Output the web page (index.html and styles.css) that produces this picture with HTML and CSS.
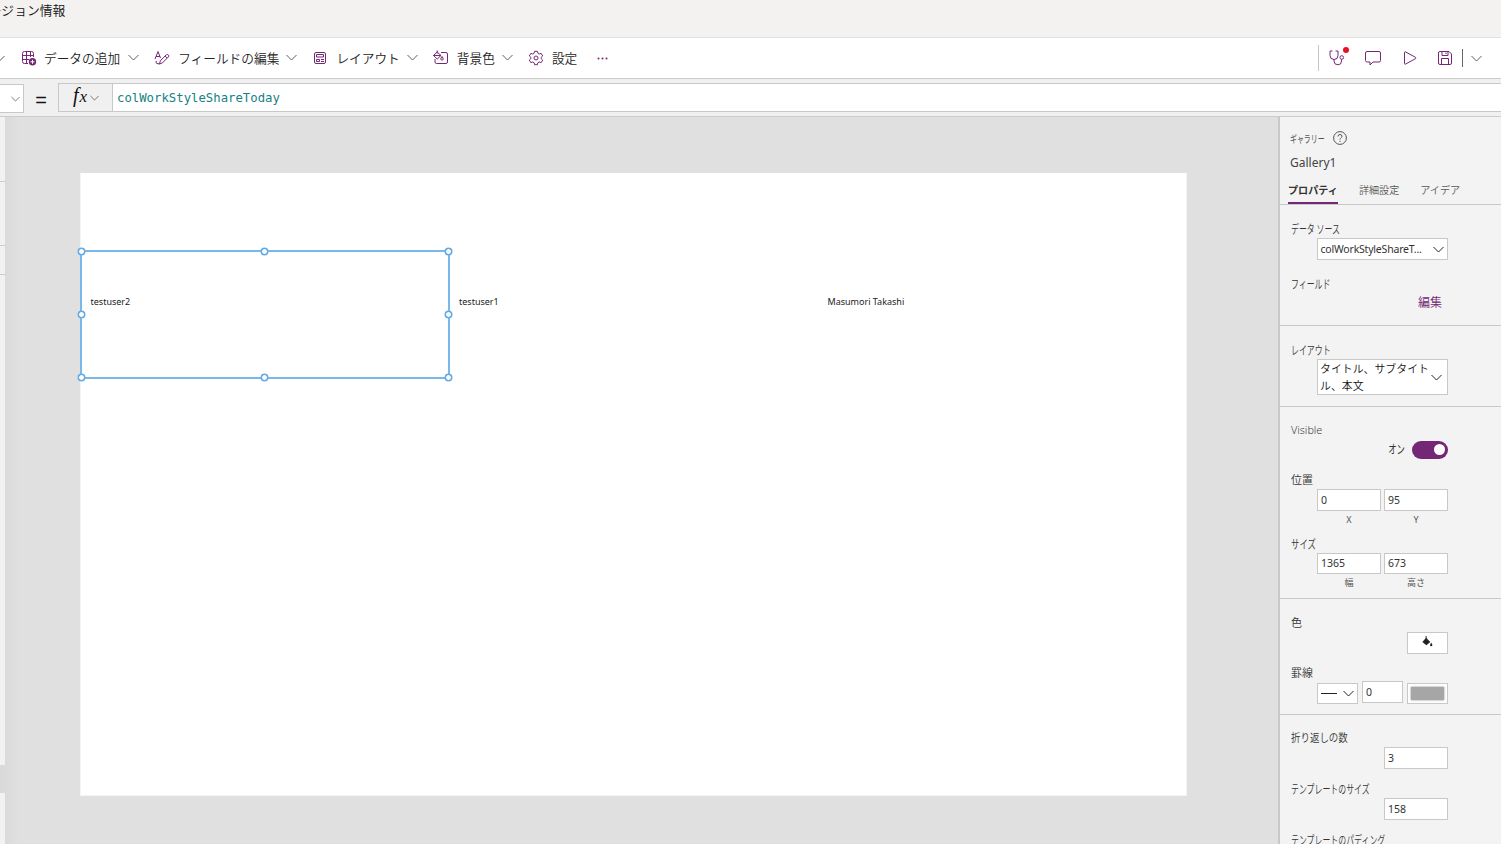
FILE: index.html
```html
<!DOCTYPE html>
<html lang="ja">
<head>
    <meta charset="UTF-8">
    <meta name="viewport" content="width=device-width, initial-scale=1.0">
    <title>Power Apps Studio</title>
    <link rel="stylesheet" href="styles.css">
</head>
<body>
    <header class="menubar"><span>バージョン情報</span></header>

    <nav class="toolbar">
        <svg class="chev first" viewBox="0 0 11 7"><path d="M.5 1l5 5 5-5"/></svg>
        <div class="tools">
            <button class="tool">
                <svg class="icon" viewBox="0 0 16 16"><path d="M7 13.500H3.500a2 2 0 0 1-2-2v-8a2 2 0 0 1 2-2h7a2 2 0 0 1 2 2V7M1.500 5.500h11M1.500 9.500H8M5.500 1.500v12M9.500 1.500V7"/><circle class="solid" cx="11.500" cy="11.800" r="3.700"/><path class="knock" d="M11.500 9.800v4M9.500 11.800h4"/></svg>
                <span>データの追加</span>
                <svg class="chev" viewBox="0 0 11 7"><path d="M.5 1l5 5 5-5"/></svg>
            </button>
            <button class="tool">
                <svg class="icon" viewBox="0 0 16 16"><path d="M1 9L4 1.500 6.500 8M2 6.500h4M5.500 14l.8-3.200 6-6q1-.8 2 .1t.1 2l-6 6zM11 6l2 2M2.300 11q-1 2 .7 2.500l2.500.5"/></svg>
                <span>フィールドの編集</span>
                <svg class="chev" viewBox="0 0 11 7"><path d="M.5 1l5 5 5-5"/></svg>
            </button>
            <button class="tool">
                <svg class="icon" viewBox="0 0 16 16"><rect x="2.500" y="2.500" width="11" height="11" rx="1.500"/><path d="M4.500 4.500h7v2.500h-7zM4.500 9.500H7.500v2H4.500zM9 9.500h3M9 11.500h3"/></svg>
                <span>レイアウト</span>
                <svg class="chev" viewBox="0 0 11 7"><path d="M.5 1l5 5 5-5"/></svg>
            </button>
            <button class="tool">
                <svg class="icon" viewBox="0 0 16 16"><path d="M8 2.500h5a1.500 1.500 0 0 1 1.500 1.500v8a1.500 1.500 0 0 1-1.500 1.500H3.500A1.500 1.500 0 0 1 2 12V9M.5 5.500L4.200 2 8 5.500 4.200 9zM.5 5.500H8M4.200.5v3M9 6.500q2.500 3.500 0 3.500t0-3.500z"/></svg>
                <span>背景色</span>
                <svg class="chev" viewBox="0 0 11 7"><path d="M.5 1l5 5 5-5"/></svg>
            </button>
            <button class="tool">
                <svg class="icon" viewBox="0 0 16 16"><path d="M6.600 1.300h2.800l.5 2 1.300.7 2-.6 1.500 2.500L13.200 7.300v1.400l1.500 1.400-1.500 2.500-2-.6-1.300.7-.5 2H6.600l-.5-2-1.300-.7-2 .6-1.500-2.500 1.500-1.400V7.300L1.300 5.900l1.500-2.500 2 .6 1.300-.7z"/><circle cx="8" cy="8" r="2"/></svg>
                <span>設定</span>
            </button>
            <svg class="dots" viewBox="0 0 11 3"><circle cx="1.500" cy="1.500" r="1"/><circle cx="5.500" cy="1.500" r="1"/><circle cx="9.500" cy="1.500" r="1"/></svg>
        </div>
        <div class="actions">
            <span class="divider"></span>
            <span class="checker">
                <svg class="icon" viewBox="0 0 16 16"><path d="M3.500 1H1v4.500a4 4 0 0 0 8 0V1H6.500M5 9.500V11q0 3.800 4 3.800 3.500 0 3.500-3.800V9.500"/><circle cx="12.800" cy="7.500" r="1.800"/></svg>
                <i class="alert"></i>
            </span>
            <svg class="icon comment" viewBox="0 0 16 16"><path d="M2 1.500h12q1.500 0 1.500 1.500v7.500q0 1.500-1.500 1.500H8l-3 3v-3H2.500Q.5 12 .5 10.500V3Q.5 1.500 2 1.500z"/></svg>
            <svg class="icon play" viewBox="0 0 16 16"><path d="M2.500 2.500q0-1 1-.6l10 5.400q1 .7 0 1.400l-10 5.400q-1 .4-1-.6z"/></svg>
            <svg class="icon save" viewBox="0 0 16 16"><path d="M3 1.500h9L14.500 4v9q0 1.500-1.500 1.500H3q-1.500 0-1.500-1.500V3Q1.500 1.500 3 1.500zM5 1.500v4h6v-4M4.500 14.500v-6h7v6M9 2.500v1.500"/></svg>
            <span class="divider dark"></span>
            <svg class="chev" viewBox="0 0 11 7"><path d="M.5 1l5 5 5-5"/></svg>
        </div>
    </nav>

    <div class="formula-bar">
        <div class="property-select"><svg class="chev" viewBox="0 0 11 7"><path d="M.5 1l5 5 5-5"/></svg></div>
        <span class="equal">=</span>
        <div class="fx"><em>f<small>x</small></em><svg class="chev" viewBox="0 0 11 7"><path d="M.5 1l5 5 5-5"/></svg></div>
        <div class="formula">colWorkStyleShareToday</div>
    </div>

    <main class="workspace">
        <aside class="tree">
            <div class="tree-head"></div>
            <div class="tree-search"></div>
            <div class="tree-app"></div>
            <div class="tree-list"></div>
            <div class="tree-active"></div>
        </aside>

        <section class="stage">
            <div class="screen">
                <div class="gallery">
                    <div class="cell">testuser2
                        <div class="selection">
                            <i class="handle top left"></i><i class="handle top center"></i><i class="handle top right"></i>
                            <i class="handle middle left"></i><i class="handle middle right"></i>
                            <i class="handle bottom left"></i><i class="handle bottom center"></i><i class="handle bottom right"></i>
                        </div>
                    </div>
                    <div class="cell">testuser1</div>
                    <div class="cell">Masumori Takashi</div>
                </div>
            </div>
        </section>

        <aside class="panel">
            <div class="panel-head">
                <div class="kind"><span class="kana">ギャラリー</span><svg class="help" viewBox="0 0 14 14"><circle cx="7" cy="7" r="6.400"/><path d="M5 5.500q0-2 2-2t2 1.800c0 1.400-2 1.500-2 3.200M7 9.800v1.200"/></svg></div>
                <div class="name">Gallery1</div>
                <div class="tabs">
                    <span class="tab active">プロパティ</span>
                    <span class="tab">詳細設定</span>
                    <span class="tab">アイデア</span>
                </div>
            </div>

            <div class="group">
                <div class="label"><span class="kana">データ ソース</span></div>
                <div class="controls">
                    <div class="box select source">colWorkStyleShareT...<svg class="chev" viewBox="0 0 11 7"><path d="M.5 1l5 5 5-5"/></svg></div>
                </div>
                <div class="label fields"><span class="kana">フィールド</span></div>
                <a class="edit">編集</a>
            </div>

            <div class="group">
                <div class="label"><span class="kana">レイアウト</span></div>
                <div class="controls">
                    <div class="box select tall"><span>タイトル、サブタイトル、本文</span><svg class="chev" viewBox="0 0 11 7"><path d="M.5 1l5 5 5-5"/></svg></div>
                </div>
            </div>

            <div class="group">
                <div class="label latin">Visible</div>
                <div class="controls switch-row"><span class="kana on">オン</span><span class="switch"></span></div>
                <div class="label position">位置</div>
                <div class="controls">
                    <div class="field"><div class="box">0</div><small>X</small></div>
                    <div class="field"><div class="box">95</div><small>Y</small></div>
                </div>
                <div class="label size"><span class="kana">サイズ</span></div>
                <div class="controls">
                    <div class="field"><div class="box short">1365</div><small>幅</small></div>
                    <div class="field"><div class="box short">673</div><small>高さ</small></div>
                </div>
            </div>

            <div class="group">
                <div class="label">色</div>
                <div class="controls">
                    <div class="box fill">
                        <svg viewBox="0 0 14 14"><path d="M5.500 1v5" stroke="#222" fill="none"/><path d="M5.500 3L10 7.500 5.800 11 1.500 7.500z"/><path d="M11 8q2.500 4 0 4t0-4z"/></svg>
                    </div>
                </div>
                <div class="label border-label">罫線</div>
                <div class="controls border-row">
                    <div class="box line"><i></i><svg class="chev" viewBox="0 0 11 7"><path d="M.5 1l5 5 5-5"/></svg></div>
                    <div class="box width">0</div>
                    <div class="box swatch"><i></i></div>
                </div>
            </div>

            <div class="group">
                <div class="label"><span class="mixed">折り返しの数</span></div>
                <div class="controls"><div class="box number">3</div></div>
                <div class="label template"><span class="kana">テンプレートのサイズ</span></div>
                <div class="controls"><div class="box number">158</div></div>
                <div class="label template"><span class="kana">テンプレートのパディング</span></div>
            </div>
        </aside>
    </main>
</body>
</html>
```
FILE: styles.css
```css
* {
    margin: 0;
    padding: 0;
    box-sizing: border-box;
}

body {
    height: 100vh;
    display: flex;
    flex-direction: column;
    overflow: hidden;
    background: #f3f2f1;
    font-family: "Noto Sans", "Noto Sans CJK JP", sans-serif;
    font-size: 11px;
    color: #333;
}

svg {
    display: block;
    flex-shrink: 0;
    fill: none;
}

/* Top bars */
.menubar {
    height: 38px;
    flex-shrink: 0;
    border-bottom: 1px solid #e3e1df;
    font-family: "Noto Sans CJK JP", sans-serif;
    font-size: 12.8px;
    font-weight: 350;
    line-height: 20px;
    color: #111;
    white-space: nowrap;
}

.menubar span {
    margin-left: -24px;
}

.toolbar {
    height: 41px;
    flex-shrink: 0;
    display: flex;
    align-items: center;
    background: #fff;
    border-bottom: 1px solid #ccc;
}

.chev {
    width: 11px;
    height: 7px;
    stroke: #605e5c;
    stroke-width: 1;
}

.chev.first {
    margin-left: -6px;
}

.tools {
    display: flex;
    align-items: center;
    gap: 15px;
    margin-left: 16px;
}

.tool {
    display: flex;
    align-items: center;
    border: none;
    background: none;
    color: #242424;
    font-family: "Noto Sans CJK JP", sans-serif;
    font-size: 12.7px;
    font-weight: 350;
    line-height: 20px;
    white-space: nowrap;
}

.tool span {
    margin: -1px 7px 0 8px;
}

.tool:first-child span {
    margin: -1px 8px 0 7px;
}

.tools .chev {
    margin-top: -1px;
}

.icon {
    width: 16px;
    height: 16px;
    stroke: #742774;
    stroke-width: 1;
}

.icon .solid {
    fill: #742774;
    stroke: none;
}

.icon .knock {
    stroke: #fff;
}

.dots {
    width: 11px;
    height: 3px;
    fill: #742774;
    margin-left: -2px;
}

.actions {
    display: flex;
    align-items: center;
    margin-left: auto;
    padding-right: 19px;
}

.divider {
    width: 1px;
    height: 26px;
    background: #c8c6c4;
    margin-right: 10px;
}

.divider.dark {
    height: 18px;
    background: #666;
    margin: 0 8px 0 9px;
}

.checker {
    position: relative;
}

.alert {
    position: absolute;
    left: 14px;
    top: -3px;
    width: 6px;
    height: 6px;
    border-radius: 50%;
    background: #e81123;
}

.comment {
    margin-left: 20px;
}

.play {
    margin-left: 21px;
}

.save {
    margin-left: 19px;
}

/* Formula bar */
.formula-bar {
    height: 38px;
    flex-shrink: 0;
    display: flex;
    align-items: flex-start;
    padding-top: 4px;
    background: #f0f0f0;
    border-bottom: 1px solid #ccc;
}

.property-select {
    width: 24px;
    height: 29px;
    margin-top: 1px;
    display: flex;
    align-items: center;
    justify-content: flex-end;
    padding-right: 3px;
    background: #fff;
    border: 1px solid #c8c8c8;
    border-left: none;
}

.property-select .chev {
    width: 9px;
    height: 6px;
}

.equal {
    width: 34px;
    text-align: center;
    font-family: "Liberation Sans", sans-serif;
    font-size: 20px;
    line-height: 34px;
    color: #111;
}

.fx {
    width: 54px;
    height: 29px;
    display: flex;
    align-items: center;
    padding-left: 14px;
    border: 1px solid #c8c8c8;
    border-right: none;
}

.fx em {
    width: 17px;
    font-family: "Liberation Serif", serif;
    font-size: 20px;
    line-height: 24px;
    margin-top: -3px;
    color: #111;
}

.fx small {
    margin-left: 1px;
    font-size: 17px;
}

.fx .chev {
    width: 9px;
    height: 6px;
}

.formula {
    flex: 1;
    height: 29px;
    padding-left: 4px;
    background: #fff;
    border: 1px solid #c8c8c8;
    border-right: none;
    font-family: "DejaVu Sans Mono", monospace;
    font-size: 12.3px;
    line-height: 28px;
    color: #168282;
}

/* Workspace */
.workspace {
    flex: 1;
    display: flex;
    min-height: 0;
}

.tree {
    width: 5px;
    flex-shrink: 0;
}

.tree-head {
    height: 65px;
    border-bottom: 1px solid #ccc;
}

.tree-search {
    height: 64px;
    border-bottom: 1px solid #ccc;
}

.tree-app {
    height: 29px;
    border-bottom: 1px solid #ccc;
}

.tree-list {
    height: 490px;
}

.tree-active {
    height: 28px;
    background: #dadada;
}

.stage {
    flex: 1;
    padding: 56px 0 0 75px;
    background: linear-gradient(to right, #dadada, #e0e0e0 14px);
}

.screen {
    width: 1107px;
    height: 623px;
    padding-top: 78px;
    background: #fff;
    border: 1px solid #f4f4f4;
    border-top: none;
}

.gallery {
    display: grid;
    grid-template-columns: repeat(3, 368.500px);
    margin-left: -1px;
}

.cell {
    position: relative;
    height: 127px;
    padding: 44px 0 0 10.500px;
    font-size: 9px;
    line-height: 13px;
    color: #222;
}

.selection {
    position: absolute;
    left: 0;
    top: -1px;
    width: 370px;
    height: 129px;
    border: 2px solid #7ab8ea;
}

.handle {
    position: absolute;
    width: 7px;
    height: 7px;
    border: 1px solid #4a9ade;
    border-radius: 50%;
    background: #fff;
    box-shadow: 0 0 0 .5px #6fb1e6;
}

.handle.top { top: -4px; }
.handle.middle { top: 59px; }
.handle.bottom { bottom: -4px; }
.handle.left { left: -4px; }
.handle.center { left: 179px; }
.handle.right { right: -4px; }

/* Properties panel */
.panel {
    width: 223px;
    flex-shrink: 0;
    overflow: hidden;
    background: #f3f3f3;
    border-left: 2px solid #c8c8c8;
}

.kana {
    display: inline-block;
    transform: scaleX(.66);
    transform-origin: left;
    font-size: 12px;
    white-space: nowrap;
}

.mixed {
    display: inline-block;
    transform: scaleX(.86);
    transform-origin: left;
}

.panel-head {
    height: 88px;
    padding-top: 12px;
    border-bottom: 1px solid #c8c8c8;
}

.kind {
    display: flex;
    align-items: center;
    height: 18px;
    padding-left: 10px;
    color: #555;
}

.kind .kana {
    width: 43px;
    font-size: 10.500px;
}

.help {
    width: 14px;
    height: 14px;
    stroke: #555;
    stroke-width: 1;
}

.name {
    height: 31px;
    padding-left: 10px;
    font-size: 12px;
    line-height: 31px;
    color: #444;
}

.tabs {
    display: flex;
    gap: 21px;
    padding-left: 8px;
    font-size: 10.100px;
    line-height: 24px;
    color: #555;
}

.tab {
    height: 26px;
    font-weight: 350;
}

.tab.active {
    border-bottom: 2px solid #742774;
    font-weight: 700;
    color: #333;
}

.group {
    padding: 15px 53px 0 11px;
    border-bottom: 1px solid #c8c8c8;
}

.group:nth-child(2) { height: 121px; }
.group:nth-child(3) { height: 81px; }
.group:nth-child(4) { height: 192px; }
.group:nth-child(5) { height: 116px; }
.group:nth-child(6) { padding-top: 14px; border: none; }

.label {
    height: 18px;
    font-family: "Noto Sans CJK JP", sans-serif;
    font-weight: 350;
    line-height: 17px;
    color: #333;
}

.label.latin {
    font-family: "Noto Sans", sans-serif;
    font-size: 10.800px;
    line-height: 16px;
    color: #444;
}

.controls {
    display: flex;
    justify-content: flex-end;
    gap: 3px;
}

.box {
    height: 22px;
    padding: 0 3px;
    background: #fff;
    border: 1px solid #c8c8c8;
    font-size: 10.500px;
    line-height: 21px;
    color: #333;
}

.select {
    width: 131px;
    display: flex;
    align-items: center;
    justify-content: space-between;
    white-space: nowrap;
}

.source {
    padding-left: 2.500px;
    letter-spacing: -.2px;
    line-height: 23px;
}

.box .chev {
    stroke: #222;
}

.tall {
    height: 36px;
    padding-left: 2px;
    padding-right: 5px;
    font-family: "Noto Sans CJK JP", sans-serif;
    font-size: 10.900px;
    font-weight: 350;
    line-height: 17px;
    white-space: normal;
    color: #111;
}

.tall span {
    width: 112px;
    flex-shrink: 0;
    margin: -1px -2px 0 0;
}

.fields {
    margin-top: 15px;
}

.edit {
    display: block;
    margin-top: 1px;
    padding-right: 6px;
    text-align: right;
    font-size: 12px;
    font-weight: 350;
    line-height: 18px;
    color: #742774;
}

.switch-row {
    height: 18px;
    margin-top: 1px;
    line-height: 18px;
}

.on {
    transform: scaleX(.7);
    transform-origin: right;
}

.switch {
    width: 36px;
    height: 18px;
    margin-left: 4px;
    padding: 3px;
    border-radius: 9px;
    background: #742774;
}

.switch::after {
    content: "";
    display: block;
    width: 11px;
    height: 11px;
    margin-left: auto;
    border-radius: 50%;
    background: #fff;
}

.position {
    margin-top: 12px;
}

.size {
    margin-top: 10px;
}

.size .kana {
    transform: scaleX(.7);
}

.field {
    width: 64px;
}

.field small {
    display: block;
    height: 14px;
    text-align: center;
    font-size: 9px;
    line-height: 17px;
    color: #555;
}

.short {
    height: 21px;
    line-height: 19px;
}

.fill {
    width: 41px;
    display: flex;
    justify-content: center;
    padding-top: 2px;
}

.fill svg {
    width: 13px;
    height: 13px;
    fill: #222;
}

.border-label {
    margin-top: 10px;
    height: 17px;
}

.border-row {
    gap: 4px;
}

.line {
    width: 41px;
    height: 21px;
    margin-top: 2px;
    display: flex;
    align-items: center;
    justify-content: space-between;
}

.line i {
    width: 16px;
    height: 1px;
    background: #222;
}

.width {
    width: 41px;
}

.swatch {
    width: 41px;
    height: 21px;
    margin-top: 2px;
}

.swatch i {
    display: block;
    height: 13px;
    margin-top: 3px;
    background: #a6a6a6;
    box-shadow: 0 0 2px #888;
}

.number {
    width: 64px;
}

.template {
    margin-top: 11px;
}
```
